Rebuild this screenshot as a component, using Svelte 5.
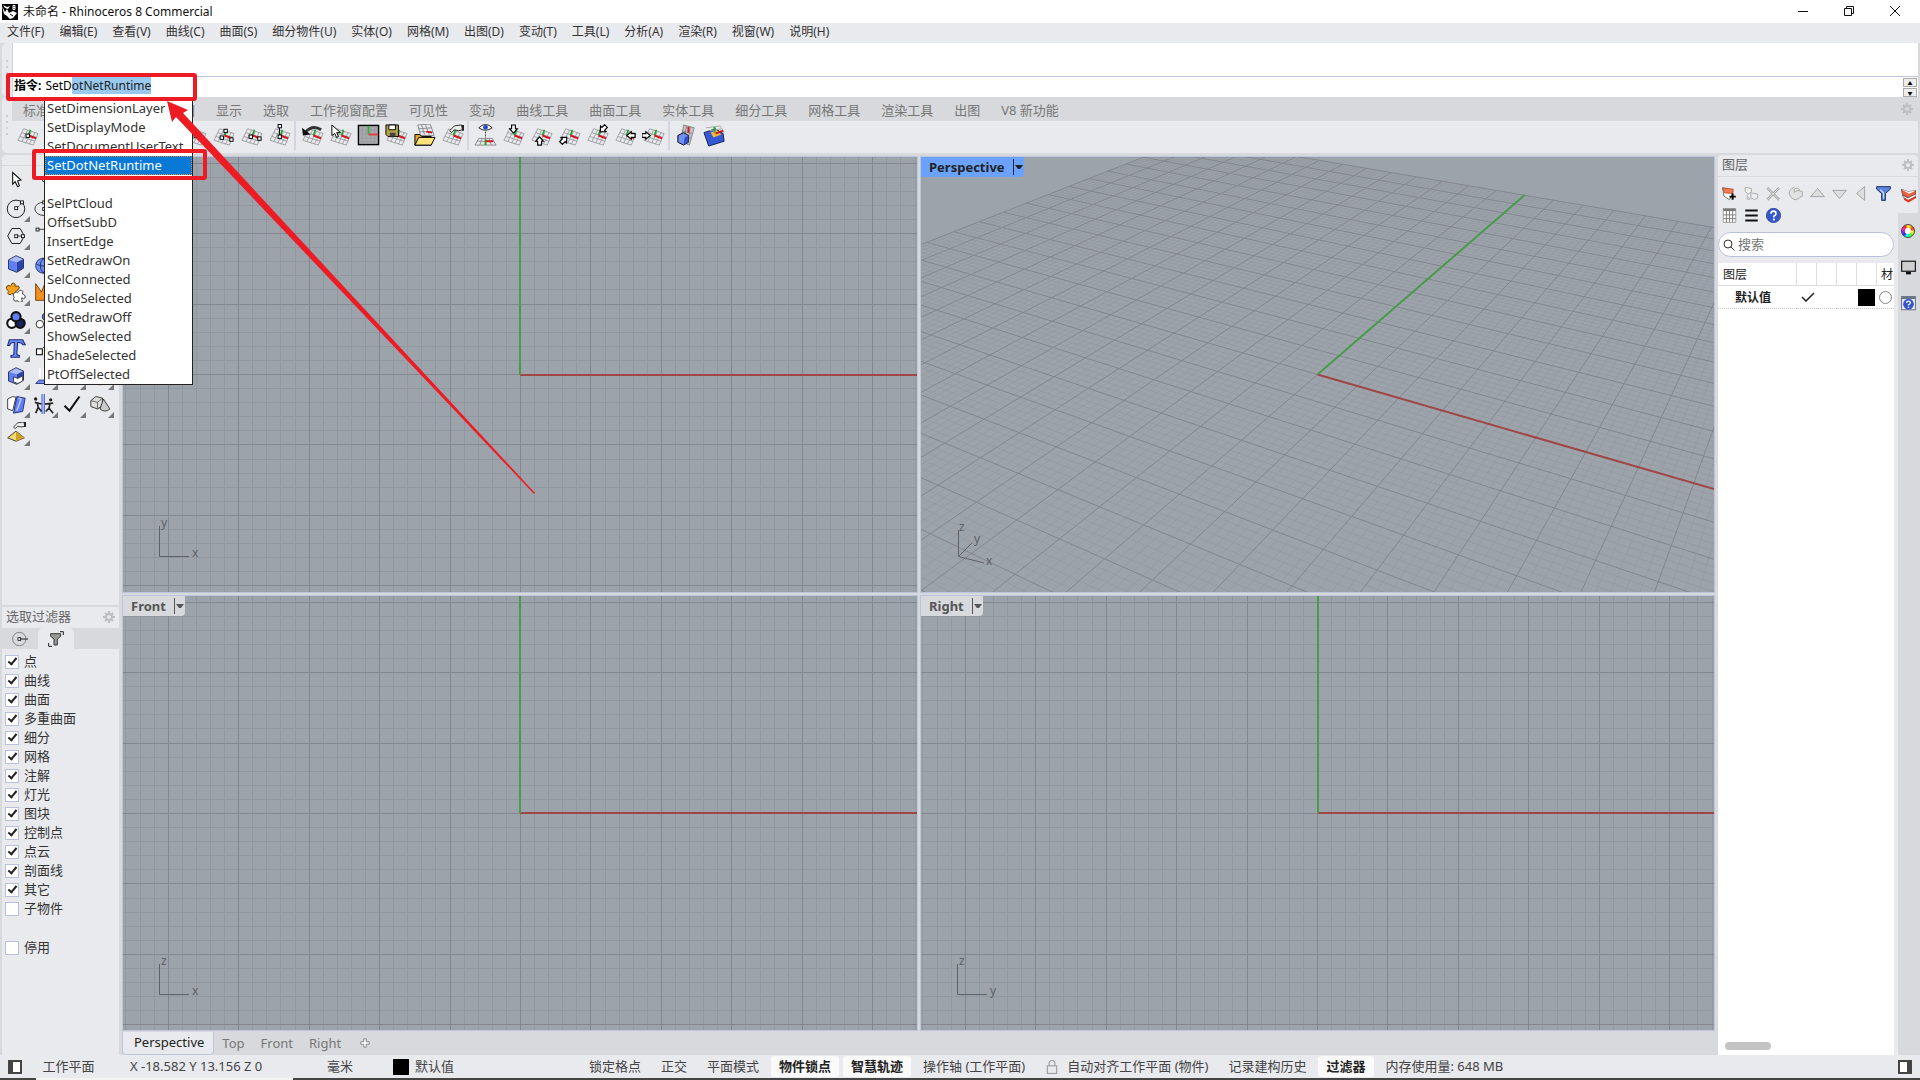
<script lang="ts">
  import { onMount } from "svelte";

  const menus = ["文件(F)", "编辑(E)", "查看(V)", "曲线(C)", "曲面(S)", "细分物件(U)", "实体(O)", "网格(M)", "出图(D)", "变动(T)", "工具(L)", "分析(A)", "渲染(R)", "视窗(W)", "说明(H)"];
  const toolTabs = ["标准", "工作平面", "设置视图", "显示", "选取", "工作视窗配置", "可见性", "变动", "曲线工具", "曲面工具", "实体工具", "细分工具", "网格工具", "渲染工具", "出图", "V8 新功能"];
  const suggestions = ["SetDimensionLayer", "SetDisplayMode", "SetDocumentUserText", "SetDotNetRuntime", "", "SelPtCloud", "OffsetSubD", "InsertEdge", "SetRedrawOn", "SelConnected", "UndoSelected", "SetRedrawOff", "ShowSelected", "ShadeSelected", "PtOffSelected"];
  const filters = ["点", "曲线", "曲面", "多重曲面", "细分", "网格", "注解", "灯光", "图块", "控制点", "点云", "剖面线", "其它"];

  let command = "SetDotNetRuntime";
  let commandInput: HTMLInputElement;

  onMount(() => {
    commandInput.focus();
    commandInput.setSelectionRange(4, command.length);
  });

  // construction plane base, 24x24
  const plane =
    '<path d="M8 5 L23 10 M6 9 L21.500 14 M4 13 L20 18 M2 17 L18 22 M8 5 L2 17 M12 6.500 L6 18.500 M16 8 L10 20 M20 9 L14 21 M23 10 L18 22" stroke="#96989c" stroke-width=".9" fill="none"/><path d="M13 12 L15 6" stroke="#22a52a" stroke-width="1.800"/><path d="M13 12 L21 15" stroke="#d3151c" stroke-width="2"/>';
  const node = (x: number, y: number) => `<rect x="${x - 1.5}" y="${y - 1.5}" width="3.500" height="3.500" fill="#fff" stroke="#000"/>`;
  const arrow = (x: number, y: number, r: number) =>
    `<path transform="translate(${x} ${y}) rotate(${r})" d="M0 4.500 L4 0 H2 V-4 H-2 V0 H-4 Z" fill="#fff" stroke="#000" stroke-width="1.200"/>`;
  const hand = '<path d="M9 7 L14 2 L21 1 L23 2 V6 L18 7 L14 6 L11 9Z" fill="#eee" stroke="#222"/><path d="M21 1h3v6h-2z" fill="#222"/>';
  const cube = (a: string, b: string, c: string) =>
    `<path d="M3 7 L12 2 L21 6 L13 10Z" fill="${a}"/><path d="M3 7 L13 10 V22 L3 18Z" fill="${b}"/><path d="M13 10 L21 6 V17 L13 22Z" fill="${c}"/><path d="M3 7 L12 2 L21 6 V17 L13 22 L3 18Z" fill="none" stroke="#1c2440"/>`;

  const icons: Record<string, string> = {
    plane: plane + node(12, 12),
    plane3: plane + node(10, 14) + node(14, 7) + node(20, 16),
    plane2: plane + node(11, 13) + node(20, 15),
    planeUp: plane + '<path d="M12 3V12" stroke="#000"/>' + node(12, 2) + node(12, 13),
    undo: plane + '<path d="M4 9 Q12 0 21 6" fill="none" stroke="#333" stroke-width="3"/><path d="M1 4 L2 12 L10 11Z" fill="#111"/>',
    pick: plane + '<path d="M3 1 V12 L6 10 L8 14 L10 13 L8 9 L12 9Z" fill="#fff" stroke="#000"/>',
    grid: '<rect x="1.500" y="1.500" width="21" height="20" fill="#a8aaae" stroke="#000" stroke-width="1.500"/><path d="M5.500 2V21M9.500 2V21M14.500 2V21M18.500 2V21M2 6.500H22M2 10.500H22M2 14.500H22M2 18.500H22" stroke="#9a9ca0"/><path d="M12 2V11" stroke="#38b040" stroke-width="2"/><path d="M12 11H22" stroke="#e04040" stroke-width="2"/>',
    save: plane + '<path d="M1 1h13v12H3L1 11z" fill="#b9a44b" stroke="#000"/><path d="M4 1h7v5H4z" fill="#fff" stroke="#000"/><path d="M5 9h6v4H5z" fill="#444"/>',
    open: '<path d="M5 1L18 0L22 12H8ZM9 1L12 11M13 1L17 11M6 5L20 4M7 8L21 8" fill="none" stroke="#8b8d91"/><path d="M14 8L20 9" stroke="#d3151c" stroke-width="2"/><path d="M2 11 h5 l2 2 h10 v9 H2z" fill="#e3a82b" stroke="#000"/><path d="M2 22 L6 14 H23 L19 22Z" fill="#ffe27c" stroke="#000"/>',
    handPlane: plane + hand,
    eye: '<path d="M5 4 Q12 -3 19 4 Q12 9 5 4Z" fill="#fff" stroke="#222"/><circle cx="12" cy="3.500" r="2.500" fill="#2447c8"/><path d="M12 8V16" stroke="#444" stroke-dasharray="2 1"/><path d="M5 15H19L23 22H1ZM3 18H21M8.500 15L6 22M15.500 15L18 22" fill="none" stroke="#8b8d91"/><path d="M12 22V16" stroke="#22a52a" stroke-width="2"/><path d="M12 18H20" stroke="#d3151c" stroke-width="2"/>',
    down: plane + arrow(12, 5, 0),
    up: plane + arrow(10, 18, 180),
    upRight: plane + arrow(6, 17, 225),
    downLeft: plane + arrow(18, 5, 45),
    left: plane + arrow(18, 12, 90),
    right: plane + arrow(4, 12, 270),
    planeBox: '<path d="M9 1 L20 4 L15 22 L6 18Z M7 7L18 10M12 2L9 18M16 3L13 20M7 12L17 15" fill="#c4c6ca" stroke="#888"/><path d="M14 3V9" stroke="#e01010" stroke-width="2"/><path d="M3 12L9 9L14 12V19L9 22L3 19Z" fill="#7390f5" stroke="#000"/><path d="M10 14L14 12V19L9 22Z" fill="#3450c0"/>',
    planeSolid: '<path d="M1 9L13 5L21 10L22 18L6 23Z" fill="#3559d5" stroke="#111e55"/><path d="M8 9L14 6L19 11L11 14Z" fill="#f4b63c"/><path d="M3 4L18 2L22 9M7 7L19 5" fill="none" stroke="#aaa"/><path d="M13 10L21 7" stroke="#d3151c" stroke-width="2"/><path d="M12 3V9" stroke="#22a52a" stroke-width="2"/>',
    select: '<path d="M8 3 V17 L11 14 L14 20 L16 19 L14 13 L18 12Z" fill="#fff" stroke="#111" stroke-width="1.300"/>',
    point: '<circle cx="12" cy="12" r="2" fill="#fff" stroke="#111"/>',
    circle: '<circle cx="12" cy="13" r="10.500" fill="none" stroke="#222" stroke-width="1.200"/><path d="M12 13L20 5" stroke="#222" stroke-dasharray="2 1"/>' + node(12, 12) + node(19, 5),
    ellipse: '<ellipse cx="12" cy="13" rx="11" ry="8" fill="none" stroke="#222"/>' + node(12, 5) + node(12, 13),
    polygon: '<path d="M7 3H17L22 12L17 21H7L2 12Z" fill="none" stroke="#222" stroke-width="1.200"/><path d="M12 12H20" stroke="#222"/>' + node(12, 12) + node(20, 12),
    line: '<path d="M4 4H20V18" fill="none" stroke="#222"/>' + node(4, 4) + node(20, 18),
    box: cube("#a9baff", "#5f7df5", "#2c43ae"),
    sphere: '<circle cx="11" cy="14" r="9" fill="#6f8ff5" stroke="#18275e"/><path d="M3 12Q11 17 20 12M11 5Q4 14 11 23M11 5Q18 14 11 23" fill="none" stroke="#18275e"/>',
    puzzle: '<path d="M1 5q3-2 4 0q2-1 2-3q3-2 4 1q-1 3 1 2q4-1 4 2q-1 3-3 3q-2 1 0 4q-2 2-4 1q-2-3-3 0q-3 1-4-2q2-2 0-3q-3-2-1-5" fill="#f5a11d" stroke="#4a2e00"/><path d="M10 13q3-2 4 0q1-2 3-3q4 0 3 3q-1 2 1 2q3 1 2 4q-2 2-4 0q-1 3 1 4q-3 2-5 1q-1-3-3-1q-3 0-3-3q2-2 0-3q-1-3 1-4" fill="#fff" stroke="#222"/>',
    flame: '<path d="M2 2L9 12L13 2L21 22H2Z" fill="#f5901d" stroke="#5e2e00"/>',
    spheres: '<circle cx="7" cy="16" r="5.500" fill="#fff" stroke="#111" stroke-width="2.500"/><circle cx="17" cy="16" r="5.500" fill="#17225e" stroke="#111" stroke-width="2.500"/><circle cx="12" cy="8" r="5.500" fill="#5f7df5" stroke="#111" stroke-width="2.500"/>',
    balls: '<circle cx="7" cy="17" r="4.500" fill="#fff" stroke="#111"/><circle cx="15" cy="8" r="5" fill="#5f7df5" stroke="#111"/>',
    text: '<path d="M4 2H20L23 8H20Q19 5 14 5.500L13 19Q13 21 16 21V23H6V21Q9 21 9.500 19L10 5.500Q5 5 4.500 9H2Z" fill="#6c8af8" stroke="#1b2c77" stroke-width="1.300"/>',
    move: '<rect x="3" y="13" width="7" height="7" fill="#fff" stroke="#111" stroke-width="1.300"/><path d="M11 12L17 5" stroke="#111"/>',
    boxCut: cube("#a9baff", "#5f7df5", "#2c43ae") + '<path d="M9 13L14 15L20 12V18L14 21L9 19Z" fill="#fff" stroke="#333"/>',
    extrude: '<path d="M2 21H20L23 17H6Z" fill="#6c8af8" stroke="#1b2c77"/><path d="M7 15V3M12 15V3" stroke="#fff" stroke-width="2"/>',
    array: '<path d="M3 18h4v4H3zM10 18h4v4h-4zM17 18h4v4h-4z" fill="#fff" stroke="#111"/>',
    gizmo: '<path d="M12 4V16H20M12 16L5 20" stroke="#222" fill="none"/><rect x="10" y="18" width="4" height="5" fill="#e02020"/>',
    sheets: '<path d="M2 6L8 3L12 4L8 20L2 18Z" fill="#fff" stroke="#222"/><path d="M13 3L23 5L20 21L9 23Z" fill="#5f7df5" stroke="#17225e"/><path d="M15 5L18 6L13 20" fill="none" stroke="#b8c6ff" stroke-width="2"/>',
    people: '<path d="M11 0V24" stroke="#3f58c4" stroke-width="4"/><path d="M11 0V24" stroke="#a9b8ff" stroke-width="2"/><circle cx="2" cy="6" r="2" fill="#222"/><circle cx="20" cy="7" r="2" fill="#222"/><path d="M1 10L9 12M4 11L5 16L2 23M5 16L9 21M23 11L13 12M19 12L18 17L23 23M18 17L14 21" fill="none" stroke="#222" stroke-width="2"/>',
    check: '<path d="M3 14L9 20L21 3" fill="none" stroke="#111" stroke-width="2.500"/>',
    solids: '<path d="M1 8L7 3L15 5V14L9 18L1 15Z" fill="#ddd" stroke="#222"/><path d="M1 8L9 10L15 5M9 10V18" fill="none" stroke="#555"/><path d="M16 6L24 18Q18 23 12 18Z" fill="#c9c9c9" stroke="#222"/>',
    pyramid: '<path d="M2 19L12 11L22 19L12 23Z" fill="#f3d96f" stroke="#222"/><path d="M12 11L22 19L12 23Z" fill="#d09f25"/><g transform="translate(0 -1)">' + hand + "</g>",
    layerNew: '<path d="M1 3L17 6V12L12 22L3 16Z" fill="#fff" stroke="#333"/><path d="M1 3L18 5L17 12L4 11Z" fill="#f47b53" stroke="#a0350f"/><path d="M12 17H22M17 12V22" stroke="#000" stroke-width="3"/>',
    layerSub: '<path d="M2 2L12 4V9L7 13L2 9ZM11 11L22 13V19L17 22L11 19Z" fill="#eee" stroke="#aaa" stroke-width="1.500"/><path d="M5 14V21H10M7 18L10 21" fill="none" stroke="#aaa" stroke-width="1.500"/>',
    remove: '<path d="M2 3L21 22M21 3L2 22" stroke="#a8a8a8" stroke-width="4"/><path d="M2 3L21 22M21 3L2 22" stroke="#ddd" stroke-width="1.500"/>',
    copy: '<path d="M10 2Q1 5 2 13Q5 21 12 22L17 20L23 16V9L16 7L10 10V5Q16 1 19 7" fill="#e2e2e2" stroke="#a8a8a8" stroke-width="1.500"/>',
    triUp: '<path d="M12 4L23 17H1Z" fill="#dedede" stroke="#a0a0a0" stroke-width="1.500"/>',
    triDown: '<path d="M12 20L23 7H1Z" fill="#dedede" stroke="#a0a0a0" stroke-width="1.500"/>',
    triLeft: '<path d="M4 12L17 1V23Z" fill="#dedede" stroke="#a0a0a0" stroke-width="1.500"/>',
    funnel: '<path d="M1 1H23V5L15 12V23H9V12L1 5Z" fill="#5d82d8" stroke="#152b66" stroke-width="1.500"/><path d="M7 6L12 11V20" stroke="#c8d8ff" stroke-width="2" fill="none"/>',
    table: '<path d="M2 1H22V23H2Z" fill="#fff" stroke="#777"/><path d="M2 1H22V5H2Z" fill="#777"/><path d="M7 5V23M12 5V23M17 5V23M2 11H22M2 17H22" stroke="#777" stroke-width="1.500"/>',
    list: '<path d="M2 4H22M2 12H22M2 20H22" stroke="#111" stroke-width="3"/>',
    help: '<circle cx="12" cy="12" r="11.500" fill="#3558c9" stroke="#1c3488"/><path d="M8 9Q8 5 12 5Q16 5 16 9Q16 11 12.500 13V15" fill="none" stroke="#fff" stroke-width="2.500"/><circle cx="12.500" cy="18.500" r="1.700" fill="#fff"/>',
    layers: '<path d="M0 2L12 6L24 4V11L12 17L3 11Z" fill="#f0603f" stroke="#333"/><path d="M0 2L12 6L24 4L13 9Z" fill="#fff"/><path d="M2 11L11 16L24 9V13L12 20L4 15Z" fill="#fff" stroke="#333"/><path d="M4 15L11 19L24 13V16L12 23L5 19Z" fill="#e03423"/>',
    monitor: '<rect x="1" y="2" width="22" height="16" fill="#cfcfcf" stroke="#222" stroke-width="2"/><path d="M8 21H16" stroke="#111" stroke-width="4"/>',
    helpPanel: '<rect x="1" y="1" width="22" height="21" fill="#eef" stroke="#667" stroke-width="1.500"/><path d="M1 1H23V5H1Z" fill="#678"/><circle cx="12" cy="13" r="8.500" fill="#3558c9"/><path d="M9 11Q9 8 12 8Q15 8 15 11Q15 12 12 14V15" fill="none" stroke="#fff" stroke-width="2"/><circle cx="12" cy="18" r="1.300" fill="#fff"/>',
    gear: '<circle cx="12" cy="12" r="6" fill="none" stroke="#bdbec2" stroke-width="4"/><path d="M12 0V5M12 19V24M0 12H5M19 12H24M4 4L7 7M17 17L20 20M4 20L7 17M17 7L20 4" stroke="#bdbec2" stroke-width="4"/>',
    osnap: '<circle cx="11" cy="12" r="10" fill="none" stroke="#777" stroke-width="1.300"/><path d="M12 12H24" stroke="#222" stroke-width="1.500"/><rect x="9" y="10" width="4" height="4" fill="#fff" stroke="#111" stroke-width="1.300"/>',
    filter: '<path d="M4 4H19V8L14 12V21H9V12L4 8Z" fill="#999" stroke="#222" stroke-width="1.300"/><path d="M18 1H23V6M1 18V23H6" fill="none" stroke="#222" stroke-width="1.500"/>',
    search: '<circle cx="10" cy="10" r="8" fill="none" stroke="#333" stroke-width="2"/><path d="M15 15L23 23" stroke="#333" stroke-width="2"/>',
    lock: '<rect x="4" y="10" width="16" height="13" fill="none" stroke="#999" stroke-width="1.800"/><path d="M7 10V6Q7 1 12 1Q17 1 17 6V10" fill="none" stroke="#999" stroke-width="1.800"/>',
    plus: '<path d="M9 2H15V9H22V15H15V22H9V15H2V9H9Z" fill="#fff" stroke="#777" stroke-width="2"/>',
  };

  const planeTools = [
    ["plane", "plane", "plane", "plane", "plane", "plane", "plane", "plane3", "plane2", "planeUp"],
    ["undo", "pick", "grid", "save", "open", "handPlane"],
    ["eye", "down", "up", "upRight", "downLeft", "left", "right"],
    ["planeBox", "planeSolid"],
  ];
  const palette = [
    "select", "point", "line", "line",
    "circle", "ellipse", "line", "line",
    "polygon", "line", "line", "line",
    "box", "sphere", "box", "box",
    "puzzle", "flame", "box", "box",
    "spheres", "balls", "balls", "balls",
    "text", "move", "move", "move",
    "boxCut", "extrude", "array", "gizmo",
    "sheets", "people", "check", "solids",
    "pyramid",
  ];
  const layerTools = ["layerNew", "layerSub", "remove", "copy", "triUp", "triDown", "triLeft", "funnel", "table", "list", "help"];

  // flat grids: 5 units per major line, 14.09px per unit
  const UNIT = 14.09;
  let flatMinor = "";
  let flatMajor = "";
  for (let i = -70; i <= 70; i++) {
    const p = Math.round(i * UNIT);
    const d = `M${p} -990V990M-990 ${p}H990`;
    if (i % 5) flatMinor += d;
    else flatMajor += d;
  }

  // perspective camera, aimed at the origin
  const FOCAL = 906;
  const DIST = 70 / 0.695;
  const PITCH = Math.PI / 6;
  function project(x: number, y: number) {
    const side = x * 0.866 + y * 0.5;
    const ahead = y * 0.866 - x * 0.5;
    const depth = DIST + ahead * Math.cos(PITCH);
    return `${((FOCAL * side) / depth).toFixed(2)} ${((-FOCAL * ahead * Math.sin(PITCH)) / depth).toFixed(2)}`;
  }
  let perspMinor = "";
  let perspMajor = "";
  for (let i = -70; i <= 70; i++) {
    const d = `M${project(i, -70)}L${project(i, 70)}M${project(-70, i)}L${project(70, i)}`;
    if (i % 5) perspMinor += d;
    else perspMajor += d;
  }

  const views = [
    { name: "Top", h: "x", v: "y" },
    { name: "Perspective", h: "x", v: "z" },
    { name: "Front", h: "x", v: "z" },
    { name: "Right", h: "y", v: "z" },
  ];
</script>

{#snippet icon(name: string)}
  <svg class="icon" viewBox="0 0 24 24" aria-hidden="true">{@html icons[name]}</svg>
{/snippet}

<div class="app">
  <header class="title">
    <svg class="logo" viewBox="0 0 16 16" aria-hidden="true">
      <rect width="16" height="16" fill="#000" />
      <path d="M0 2L3 8L5 5L7 9L11 7L15 9L11 14L8 15L5 12L2 10Z" fill="#fff" />
      <path d="M1 1L5 3L8 2L6 5L3 4Z" fill="#fff" />
      <path d="M13 1.500h-2v2h2v2h-2v-2M13 1.500v2" fill="none" stroke="#fff" />
      <path d="M8 10L11 12" stroke="#000" />
    </svg>
    <span>未命名 - Rhinoceros 8 Commercial</span>
    <div class="window-buttons">
      <button aria-label="Minimize"><svg viewBox="0 0 10 10"><path d="M0 5.500H10" /></svg></button>
      <button aria-label="Restore"><svg viewBox="0 0 10 10"><path d="M.5 2.500H7.500V9.500H.5ZM2.500 2.500V.5H9.500V7.500H7.500" /></svg></button>
      <button aria-label="Close"><svg viewBox="0 0 10 10"><path d="M0 0L10 10M10 0L0 10" /></svg></button>
    </div>
  </header>

  <nav class="menu">
    {#each menus as item}<button>{item}</button>{/each}
  </nav>

  <section class="command">
    <div class="grip"><i></i><i></i><i></i><i></i></div>
    <div class="command-box">
      <div class="history"></div>
      <div class="prompt">
        <label for="command">指令:</label>
        <input id="command" type="text" bind:this={commandInput} bind:value={command} autocomplete="off" spellcheck="false" />
        <div class="spin">
          <button aria-label="Previous">▲</button>
          <button aria-label="Next">▼</button>
        </div>
      </div>
      <ul class="popup">
        {#each suggestions as item}
          <li><button class:selected={item === command}>{item}</button></li>
        {/each}
      </ul>
    </div>
  </section>

  <section class="toolbar">
    <div class="grip"><i></i><i></i><i></i><i></i></div>
    <div class="toolbar-box">
      <div class="tool-tabs">
        {#each toolTabs as tab}<button>{tab}</button>{/each}
        <button class="gear" aria-label="Toolbar options">{@render icon("gear")}</button>
      </div>
      <div class="tools">
        {#each planeTools as group}
          <div class="group">
            {#each group as tool}<button aria-label={tool}>{@render icon(tool)}</button>{/each}
          </div>
        {/each}
      </div>
    </div>
  </section>

  <main>
    <aside class="left">
      <section class="palette">
        <div class="palette-grid">
          {#each palette as tool, i}
            <button aria-label={tool} class:flyout={i > 0}>{@render icon(tool)}</button>
          {/each}
        </div>
      </section>
      <section class="filter">
        <h2>选取过滤器 <button class="gear" aria-label="Filter options">{@render icon("gear")}</button></h2>
        <div class="filter-tabs">
          <button aria-label="Osnap">{@render icon("osnap")}</button>
          <button aria-label="Selection filter" class="active">{@render icon("filter")}</button>
        </div>
        <div class="checks">
          {#each filters as f}
            <label><input type="checkbox" checked />{f}</label>
          {/each}
          <label><input type="checkbox" />子物件</label>
          <label class="disable"><input type="checkbox" />停用</label>
        </div>
      </section>
    </aside>

    <div class="center">
      <div class="viewports">
        {#each views as view}
          <section class="viewport" class:current={view.name === "Perspective"}>
            <svg class="scene" aria-hidden="true">
              <svg x="50%" y="50%" overflow="visible">
                {#if view.name === "Perspective"}
                  <path class="minor" d={perspMinor} />
                  <path class="major" d={perspMajor} />
                  <path class="x-axis" d={`M0 0L${project(70, 0)}`} />
                  <path class="y-axis" d={`M0 0L${project(0, 70)}`} />
                {:else}
                  <g shape-rendering="crispEdges">
                    <path class="minor" d={flatMinor} />
                    <path class="major" d={flatMajor} />
                    <path class="x-axis" d="M0 0H990" />
                    <path class="y-axis" d="M0 0V-990" />
                  </g>
                {/if}
              </svg>
            </svg>
            <svg class="gnomon" width="80" height="80" aria-hidden="true">
              {#if view.name === "Perspective"}
                <path d="M37.500 18V44.500L51 31M37.500 44.500L63 51" />
                <text x="38" y="19">{view.v}</text>
                <text x="53" y="31">y</text>
                <text x="65" y="53">{view.h}</text>
              {:else}
                <path d="M36.500 14V44.500H66" />
                <text x="38" y="15">{view.v}</text>
                <text x="69" y="45">{view.h}</text>
              {/if}
            </svg>
            <button class="view-title"><span>{view.name}</span><i></i></button>
          </section>
        {/each}
      </div>
      <div class="view-tabs">
        <button class="active">Perspective</button>
        <button>Top</button>
        <button>Front</button>
        <button>Right</button>
        <button aria-label="New tab" class="add">{@render icon("plus")}</button>
      </div>
    </div>

    <aside class="right">
      <h2>图层 <button class="gear" aria-label="Panel options">{@render icon("gear")}</button></h2>
      <div class="right-body">
        <div class="layers">
          <div class="layer-tools">
            {#each layerTools as tool}<button aria-label={tool}>{@render icon(tool)}</button>{/each}
          </div>
          <div class="search">
            {@render icon("search")}
            <input type="text" aria-label="搜索" placeholder="搜索" />
          </div>
          <div class="layer-list">
            <table>
              <thead>
                <tr><th class="name">图层</th><th></th><th></th><th></th><th></th><th class="material">材</th></tr>
              </thead>
              <tbody>
                <tr>
                  <td class="name">默认值</td>
                  <td><svg class="tick" viewBox="0 0 14 10"><path d="M1 5L5 9L13 1" /></svg></td>
                  <td></td>
                  <td></td>
                  <td><b class="swatch"></b></td>
                  <td><b class="ring"></b></td>
                </tr>
              </tbody>
            </table>
            <div class="scrollbar"></div>
          </div>
        </div>
        <div class="panel-tabs">
          <button class="active" aria-label="Layers">{@render icon("layers")}</button>
          <button aria-label="Properties"><span class="wheel"></span></button>
          <button aria-label="Display">{@render icon("monitor")}</button>
          <button aria-label="Help">{@render icon("helpPanel")}</button>
        </div>
      </div>
    </aside>
  </main>

  <footer>
    <button class="side-toggle" aria-label="Left sidebar"></button>
    <button class="cplane">工作平面</button>
    <span class="coords">X -18.582 Y 13.156 Z 0</span>
    <button class="units">毫米</button>
    <button class="layer"><b class="swatch"></b>默认值</button>
    <div class="modes">
      <button>锁定格点</button>
      <button>正交</button>
      <button>平面模式</button>
      <button class="on">物件锁点</button>
      <button class="on">智慧轨迹</button>
      <button>操作轴 (工作平面)</button>
      <button class="align">{@render icon("lock")}自动对齐工作平面 (物件)</button>
      <button>记录建构历史</button>
      <button class="on">过滤器</button>
      <span>内存使用量: 648 MB</span>
    </div>
    <button class="side-toggle flip" aria-label="Right sidebar"></button>
  </footer>
  <div class="edge"><i></i></div>

  <svg class="markup" width="560" height="510" aria-hidden="true">
    <rect x="8" y="75" width="187" height="24" rx="1" />
    <rect x="34" y="151" width="171" height="27" rx="1" />
    <path d="M167 101L188 110L183 113L535 493L534 494L176 117L172 122Z" />
  </svg>
</div>

<style>
  :global(body) {
    margin: 0;
    overflow: hidden;
  }

  .app {
    position: relative;
    display: flex;
    flex-direction: column;
    height: 100vh;
    background: #d7d9dd;
    color: #333;
    font-family: "Noto Sans", "Noto Sans CJK SC", sans-serif;
    font-size: 13px;
    line-height: 19px;
  }

  button,
  input {
    margin: 0;
    padding: 0;
    border: none;
    background: none;
    color: inherit;
    font: inherit;
    white-space: nowrap;
  }

  h2 {
    display: flex;
    align-items: center;
    justify-content: space-between;
    box-sizing: border-box;
    height: 21px;
    margin: 0;
    padding: 0 4px 2px;
    background: #e9eaee;
    border-radius: 4px 4px 0 0;
    color: #666;
    font-size: 13px;
    font-weight: 400;
  }

  .icon {
    display: block;
    width: 24px;
    height: 24px;
  }

  .gear .icon {
    width: 12px;
    height: 12px;
  }

  /* title and menu */
  .title {
    display: flex;
    align-items: center;
    height: 23px;
    flex: none;
    background: #fff;
    color: #111;
    font-size: 12px;
  }

  .logo {
    width: 16px;
    height: 16px;
    margin: 0 5px 0 2px;
  }

  .window-buttons {
    display: flex;
    margin-left: auto;
    padding: 0 2px 2px 0;
  }

  .window-buttons button {
    display: flex;
    justify-content: center;
    width: 46px;
  }

  .window-buttons svg {
    width: 10px;
    height: 10px;
    fill: none;
    stroke: #111;
  }

  .menu {
    display: flex;
    align-items: flex-start;
    flex: none;
    gap: 15px;
    height: 20px;
    padding-left: 7px;
    background: #e9eaee;
    font-size: 12px;
    line-height: 18px;
  }

  /* command line */
  .command,
  .toolbar {
    display: flex;
    flex: none;
    margin: 0 2px;
  }

  .grip {
    display: flex;
    flex-direction: column;
    justify-content: center;
    align-items: center;
    gap: 4px;
    width: 10px;
    background: #e9eaee;
    border-radius: 5px 0 0 5px;
  }

  .grip i {
    width: 2px;
    height: 2px;
    border-radius: 50%;
    background: #c2c3c8;
  }

  .command-box {
    position: relative;
    flex: 1;
    border-left: 1px solid #d0d3dd;
    background: #fff;
  }

  .history {
    height: 33px;
    border-bottom: 1px solid #bfc5dc;
  }

  .prompt {
    display: flex;
    align-items: flex-start;
    gap: 4px;
    height: 20px;
    padding-left: 1px;
    color: #000;
    font-size: 12px;
    line-height: 17px;
  }

  .prompt label {
    font-weight: 700;
  }

  .prompt input {
    flex: 1;
    height: 17px;
    outline: none;
  }

  .prompt input::selection {
    background: #99c9ef;
    color: #222;
  }

  .spin {
    display: flex;
    flex-direction: column;
    gap: 1px;
    margin: 1px 1px 0 0;
  }

  .spin button {
    box-sizing: border-box;
    width: 14px;
    height: 9px;
    border: 1px solid #aaa;
    background: #eee;
    font-size: 5px;
    line-height: 6px;
  }

  .popup {
    position: absolute;
    top: 56px;
    left: 31px;
    z-index: 2;
    width: 149px;
    box-sizing: border-box;
    margin: 0;
    padding: 0;
    border: 1px solid #222;
    border-top: none;
    background: #fff;
    list-style: none;
  }

  .popup button {
    display: block;
    box-sizing: border-box;
    width: 100%;
    height: 19px;
    padding-left: 2px;
    line-height: 19px;
    text-align: left;
  }

  .popup .selected {
    background: #0a78d7;
    color: #fff;
    outline: 1px dotted #d58b45;
    outline-offset: -1px;
  }

  /* toolbar */
  .toolbar-box {
    flex: 1;
    min-width: 0;
  }

  .tool-tabs {
    display: flex;
    gap: 21px;
    height: 24px;
    padding: 0 5px 0 11px;
    color: #777;
    line-height: 26px;
  }

  .tool-tabs .gear {
    margin-left: auto;
  }

  .tools {
    display: flex;
    align-items: flex-start;
    height: 32px;
    background: #e9eaee;
  }

  .group {
    display: flex;
    align-items: center;
    height: 29px;
    padding: 0 1px;
    border-right: 2px solid #d3d6e1;
  }

  .group + .group {
    padding-left: 2px;
  }

  .group:last-child {
    border: none;
  }

  .group button {
    display: flex;
    justify-content: center;
    width: 28px;
  }

  .tools .icon {
    width: 23px;
    height: 23px;
  }

  /* main area */
  main {
    display: flex;
    flex: 1;
    min-height: 0;
    padding: 2px 2px 0;
  }

  .left {
    display: flex;
    flex: none;
    flex-direction: column;
    gap: 2px;
    width: 117px;
  }

  .palette {
    height: 450px;
    background: #e9eaee;
    border-radius: 4px 4px 0 0;
  }

  .palette-grid {
    display: grid;
    grid-template-columns: repeat(4, 28px);
    grid-auto-rows: 28px;
    margin-top: 10px;
    border-top: 1px solid #d7d9dd;
  }

  .palette-grid button {
    position: relative;
    display: flex;
    align-items: center;
    justify-content: center;
  }

  .palette-grid .icon {
    width: 20px;
    height: 20px;
  }

  .flyout::after {
    content: "";
    position: absolute;
    right: 0;
    bottom: 0;
    border-left: 6px solid transparent;
    border-bottom: 6px solid #777;
  }

  .filter {
    flex: 1;
    background: #e9eaee;
  }

  .filter-tabs {
    display: flex;
    height: 21px;
    background: #d7d9dd;
  }

  .filter-tabs button {
    display: flex;
    align-items: center;
    justify-content: center;
    width: 36px;
  }

  .filter-tabs .active {
    border-radius: 5px 5px 0 0;
    background: #e9eaee;
  }

  .filter-tabs .icon {
    width: 16px;
    height: 16px;
  }

  .checks {
    display: flex;
    flex-direction: column;
    padding: 3px;
  }

  .checks label {
    display: flex;
    align-items: center;
    gap: 5px;
    height: 19px;
  }

  .checks .disable {
    margin-top: 20px;
  }

  .checks input {
    appearance: none;
    box-sizing: border-box;
    width: 14px;
    height: 14px;
    border: 1px solid #b8c0da;
    background: #fff;
  }

  .checks input:checked::after {
    content: "";
    display: block;
    width: 3px;
    height: 7px;
    margin: 0 0 0 4px;
    border: solid #222;
    border-width: 0 2px 2px 0;
    transform: rotate(40deg);
  }

  .center {
    display: flex;
    flex: 1;
    flex-direction: column;
    min-width: 0;
    padding: 1px 3px 0;
  }

  .viewports {
    display: grid;
    flex: 1;
    grid-template-columns: 794fr 793fr;
    grid-template-rows: 435fr 434fr;
    gap: 4px;
    min-height: 0;
    padding: 1px;
  }

  .viewport {
    position: relative;
    overflow: hidden;
    background: #9da3aa;
    outline: 1px solid #bcc6da;
  }

  .scene {
    position: absolute;
    width: 100%;
    height: 100%;
  }

  .minor,
  .major,
  .x-axis,
  .y-axis {
    fill: none;
  }

  .minor {
    stroke: #9298a0;
  }

  .current .minor {
    stroke-opacity: 0.6;
  }

  .major {
    stroke: #83868e;
  }

  .x-axis {
    stroke: #a04646;
    stroke-width: 2px;
  }

  .y-axis {
    stroke: #489b4a;
    stroke-width: 2px;
  }

  .gnomon {
    position: absolute;
    bottom: 0;
    left: 0;
    fill: none;
    stroke: #5f6166;
  }

  .gnomon text {
    fill: #5f6166;
    stroke: none;
    font-size: 12px;
  }

  .view-title {
    position: relative;
    display: flex;
    height: 20px;
    border-radius: 0 0 4px 0;
    background: #d7d9dd;
    color: #555;
    font-size: 13px;
    font-weight: 700;
    line-height: 20px;
  }

  .view-title span {
    padding: 0 8px;
  }

  .view-title i {
    width: 10px;
    margin: 2px 0;
    border-left: 1px solid currentColor;
  }

  .view-title i::after {
    content: "";
    display: block;
    margin: 6px 1px;
    border: 3px solid transparent;
    border-top: 4px solid currentColor;
  }

  .current .view-title {
    background: #6ca2ff;
    color: #222;
  }

  .view-tabs {
    display: flex;
    align-items: center;
    height: 24px;
    color: #777;
    font-size: 13px;
  }

  .view-tabs button {
    padding: 0 8px;
  }

  .view-tabs .active {
    height: 23px;
    padding: 0 9px 0 11px;
    border: 1px solid #bcc6da;
    border-top: none;
    border-radius: 0 0 5px 5px;
    background: #e9eaee;
    color: #222;
  }

  .view-tabs .add {
    padding: 0 11px;
  }

  .view-tabs .icon {
    width: 10px;
    height: 10px;
  }

  /* layer panel */
  .right {
    display: flex;
    flex: none;
    flex-direction: column;
    width: 200px;
  }

  .right-body {
    display: flex;
    flex: 1;
    min-height: 0;
    border-top: 1px solid #d7d9dd;
    background: #e9eaee;
  }

  .layers {
    display: flex;
    flex: 1;
    flex-direction: column;
    padding-right: 4px;
  }

  .layer-tools {
    display: flex;
    flex-wrap: wrap;
    padding: 5px 0 6px;
  }

  .layer-tools button {
    display: flex;
    align-items: center;
    justify-content: center;
    width: 22px;
    height: 22px;
  }

  .layer-tools .icon,
  .panel-tabs .icon {
    width: 15px;
    height: 15px;
  }

  .search {
    display: flex;
    align-items: center;
    gap: 3px;
    height: 23px;
    padding: 0 4px;
    border: 1px solid #b8c0da;
    border-radius: 13px;
    background: #fff;
  }

  .search .icon {
    width: 12px;
    height: 12px;
  }

  .search input {
    width: 120px;
    outline: none;
  }

  .layer-list {
    display: flex;
    flex: 1;
    flex-direction: column;
    margin-top: 6px;
    background: #fff;
  }

  table {
    width: 100%;
    table-layout: fixed;
    border-collapse: collapse;
    font-size: 12px;
  }

  th,
  td {
    width: 19px;
    height: 22px;
    padding: 0;
    border-right: 1px solid #dcdde2;
    border-bottom: 1px solid #dcdde2;
    color: #222;
    font-weight: 400;
    text-align: left;
  }

  td {
    border-right: none;
    border-bottom: 1px dotted #ccc;
  }

  th:last-child {
    border-right: none;
  }

  .name {
    width: 73px;
    padding-left: 5px;
  }

  td.name {
    padding-left: 17px;
    font-weight: 700;
  }

  .material {
    width: auto;
    padding-left: 4px;
  }

  .tick {
    display: block;
    width: 14px;
    height: 10px;
    margin-left: 4px;
    fill: none;
    stroke: #222;
    stroke-width: 1.5px;
  }

  .swatch {
    display: block;
    width: 17px;
    height: 17px;
    margin-left: 1px;
    background: #000;
  }

  .ring {
    display: block;
    box-sizing: border-box;
    width: 13px;
    height: 13px;
    margin-left: 2px;
    border: 1px solid #888;
    border-radius: 50%;
  }

  .scrollbar {
    width: 46px;
    height: 8px;
    margin: auto 0 5px 7px;
    border-radius: 4px;
    background: #c4c4c4;
  }

  .panel-tabs {
    display: flex;
    flex-direction: column;
    width: 20px;
    background: #d7d9dd;
  }

  .panel-tabs button {
    display: flex;
    align-items: center;
    justify-content: center;
    height: 36px;
  }

  .panel-tabs .active {
    background: #e9eaee;
  }

  .wheel {
    box-sizing: border-box;
    width: 14px;
    height: 14px;
    border-radius: 50%;
    background: radial-gradient(#fff 35%, transparent 40%), conic-gradient(#ff2, #fa2, #f22, #ff2, #6f2, #2f6, #2ff, #22f, #a2f, #f2a, #f22, #ff2);
    border: 1px solid #444;
  }

  /* status bar */
  footer {
    display: flex;
    align-items: center;
    flex: none;
    height: 23px;
    padding: 0 8px;
    background: #e9eaee;
    color: #444;
  }

  .side-toggle {
    width: 14px;
    height: 14px;
    border: 2px solid #444;
    border-left-width: 5px;
    background: #fff;
  }

  .side-toggle.flip {
    border-width: 2px 5px 2px 2px;
  }

  .cplane {
    width: 53px;
    margin: 0 35px 0 20px;
  }

  .coords {
    width: 197px;
  }

  .units {
    margin-right: 39px;
  }

  .layer {
    display: flex;
    align-items: center;
    gap: 6px;
    width: 189px;
  }

  footer .swatch {
    width: 16px;
    height: 16px;
  }

  .modes {
    display: flex;
    align-items: center;
    flex: 1;
    gap: 4px;
  }

  .modes button,
  .modes span {
    padding: 1px 8px;
  }

  .modes .on {
    border-radius: 3px;
    background: #fafafa;
    color: #222;
    font-weight: 700;
  }

  .align {
    display: flex;
    align-items: center;
    gap: 8px;
  }

  .align .icon {
    width: 14px;
    height: 14px;
  }

  .edge {
    flex: none;
    height: 2px;
    padding-left: 36px;
    background: #444;
  }

  .edge i {
    display: block;
    width: 257px;
    height: 2px;
    background: #f4f4f4;
  }

  /* red callouts over the window */
  .markup {
    position: absolute;
    top: 0;
    left: 0;
    z-index: 3;
    pointer-events: none;
    fill: #ed1c24;
  }

  .markup rect {
    fill: none;
    stroke: #ed1c24;
    stroke-width: 4px;
  }
</style>
